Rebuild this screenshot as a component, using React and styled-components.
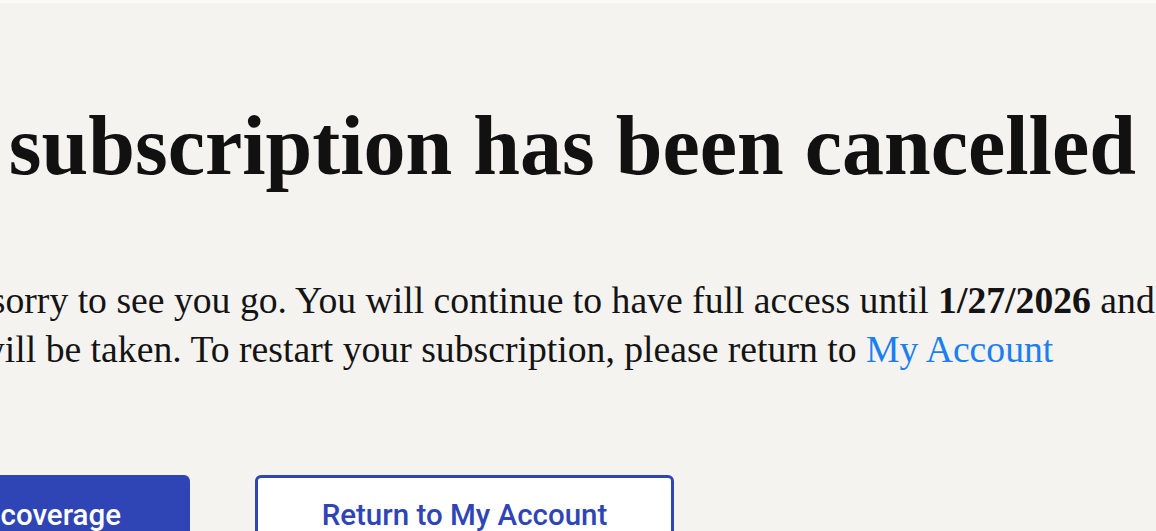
import React from 'react';
import styled, {createGlobalStyle} from "styled-components";

const GlobalStyle = createGlobalStyle`
  html, body {
    margin: 0;
    padding: 0;
    background-color: #f4f3f0;
  }
  body {
    overflow: hidden;
  }
`;

const Page = styled.div`
  width: 1156px;
  height: 531px;
  overflow: hidden;
  background-color: #f4f3f0;
  border-top: 3px solid #fafaf8;
  box-sizing: border-box;
`;

const Content = styled.main`
  width: 1600px;
  margin-left: -188px;
  padding-top: 93px;
`;

const Title = styled.h1`
  margin: 0;
  font-family: "Liberation Serif", "Times New Roman", serif;
  font-size: 84px;
  line-height: 100px;
  font-weight: 700;
  color: #111;
  white-space: nowrap;
`;

const Message = styled.p`
  margin: 80px 0 0;
  padding-left: 84px;
  font-family: "Liberation Serif", "Times New Roman", serif;
  font-size: 37.7px;
  line-height: 49px;
  color: #141414;
  white-space: nowrap;

  strong {
    font-weight: 700;
  }
`;

const Link = styled.a`
  color: #1b7ff0;
  text-decoration: none;
`;

const Actions = styled.div`
  display: grid;
  grid-template-columns: 360px 419px;
  gap: 65px;
  margin-top: 101px;
  padding-left: 18px;
`;

const Button = styled.button`
  height: 80px;
  box-sizing: border-box;
  border: 3px solid #2f45b6;
  border-radius: 6px;
  padding: 0;
  display: flex;
  align-items: center;
  justify-content: flex-end;
  font-family: Roboto, "Liberation Sans", sans-serif;
  font-size: 29.5px;
  font-weight: 500;
  background-color: ${({primary}) => primary ? "#2f45b6" : "#ffffff"};
  color: ${({primary}) => primary ? "#ffffff" : "#2f45b6"};
  ${({primary}) => primary
    ? "padding-right: 66px;"
    : "justify-content: center;"}
  cursor: pointer;
`;

const App = () => {
  return (
    <Page>
      <GlobalStyle />
      <Content>
        <Title>Your subscription has been cancelled</Title>
        <Message>
          We're sorry to see you go. You will continue to have full access until <strong>1/27/2026</strong> and
          <br />
          a fee will be taken. To restart your subscription, please return to <Link href="#">My Account</Link>
        </Message>
        <Actions>
          <Button primary>Restore coverage</Button>
          <Button>Return to My Account</Button>
        </Actions>
      </Content>
    </Page>
  );
};

export default App;
